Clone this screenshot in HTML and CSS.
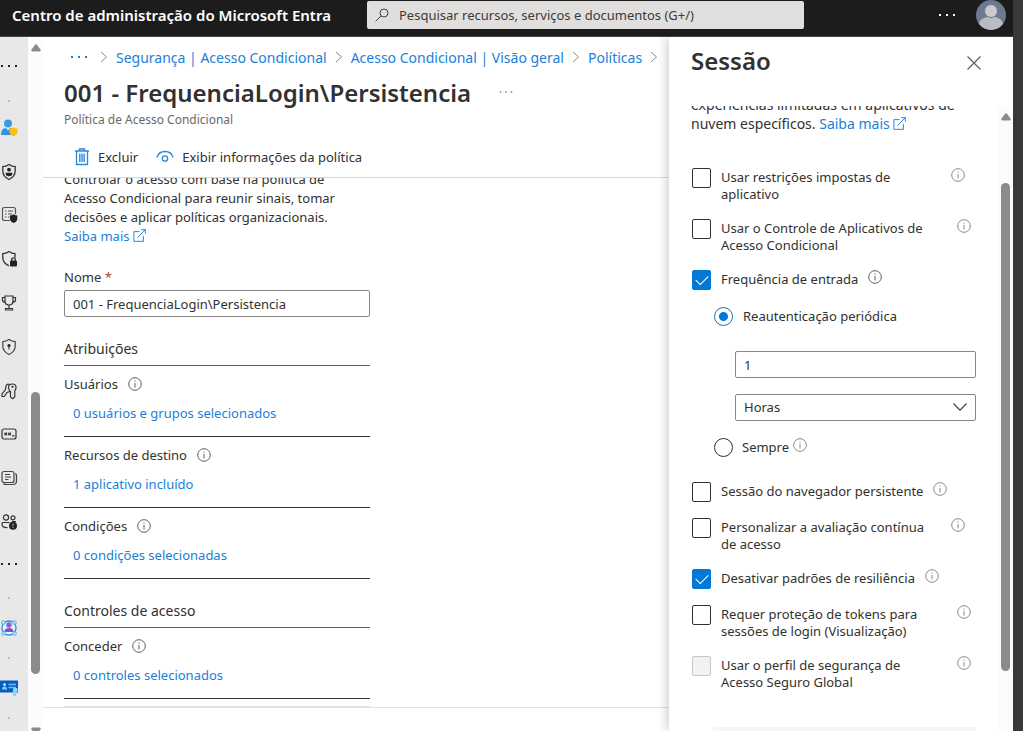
FILE: index.html
```html
<!DOCTYPE html>
<html lang="pt-BR">
<head>
    <meta charset="UTF-8">
    <title>Centro de administração do Microsoft Entra</title>
    <link rel="stylesheet" href="styles.css">
</head>
<body>
<!--shared icons-->
<svg class="icon-defs" aria-hidden="true">
    <symbol id="icon-info" viewBox="0 0 14 14">
        <circle cx="7" cy="7" r="6.3" fill="none" stroke="currentColor"/>
        <path d="M7 6v4.5M7 3.5v1.2" stroke="currentColor" fill="none"/>
    </symbol>
    <symbol id="icon-external" viewBox="0 0 14 14">
        <path d="M7 2.8H1v10.5h10.2V7.5M4.8 9.2l8.4-8.4M8.8.7h4.5v4.5" stroke="currentColor" fill="none"/>
    </symbol>
    <symbol id="icon-chevron" viewBox="0 0 8 12">
        <path d="M1 1l5.5 5L1 11" stroke="currentColor" fill="none"/>
    </symbol>
    <symbol id="icon-more" viewBox="0 0 18 4">
        <path d="M1 1h2v2H1zM8 1h2v2H8zM15 1h2v2h-2z" fill="currentColor"/>
    </symbol>
    <symbol id="icon-arrow" viewBox="0 0 10 8">
        <path d="M4 .8Q5-.4 6 .8l3.6 5Q10 7.5 8.500 7.500h-7Q0 7.500.4 5.800z" fill="currentColor"/>
    </symbol>
</svg>

<div class="screen">
    <div class="portal">
        <header class="topbar">
            <span class="brand">Centro de administração do Microsoft Entra</span>
            <label class="search">
                <svg class="search-icon" viewBox="0 0 14 14" aria-hidden="true">
                    <circle cx="9" cy="5" r="4" fill="none" stroke="#444"/>
                    <path d="M6 8L.6 13.400" stroke="#444"/>
                </svg>
                <input type="text" aria-label="Pesquisar" placeholder="Pesquisar recursos, serviços e documentos (G+/)">
            </label>
            <button class="topbar-more" aria-label="Mais">
                <svg width="18" height="4"><use href="#icon-more"/></svg>
            </button>
            <button class="avatar" aria-label="Conta">
                <svg width="30" height="30" viewBox="0 0 30 30">
                    <defs><clipPath id="avatar-clip"><circle cx="15" cy="15" r="15"/></clipPath></defs>
                    <g clip-path="url(#avatar-clip)">
                        <rect width="30" height="30" fill="#6b7a90"/>
                        <ellipse cx="15" cy="24" rx="12" ry="7.500" fill="#b9bdc2"/>
                        <circle cx="15" cy="11" r="6.500" fill="#c9cbce" stroke="#6b7a90"/>
                    </g>
                </svg>
            </button>
        </header>

        <div class="workspace">
            <nav class="rail" aria-label="Menu">
                <a href="#" class="rail-top" aria-label="Mais"><svg width="18" height="4"><use href="#icon-more"/></svg></a>
                <span class="rail-dot"></span>
                <div class="rail-list">
                    <a href="#" aria-label="Usuários">
                        <svg viewBox="0 0 18 18">
                            <circle cx="8" cy="4.500" r="4" fill="#3a9be0"/>
                            <path d="M1 16q0-7 5-7l2 2.500L10 9q5 0 5 7z" fill="#3193dd"/>
                            <path d="M9.500 9.500q2.500 0 4-1.200 1.500 1.200 4 1.200v3q0 3-4 5-4-2-4-5z" fill="#fdc010"/>
                        </svg>
                    </a>
                    <a href="#" aria-label="Proteção de identidade">
                        <svg viewBox="0 0 18 18" fill="none" stroke="#333" stroke-width="1.300">
                            <path d="M9 1.500q3 2 6.200 2.200V8q0 5.500-6.200 8.500Q2.800 13.500 2.800 8V3.700Q6 3.500 9 1.500z"/>
                            <circle cx="9" cy="6.700" r="1.900" fill="#222" stroke="none"/>
                            <path d="M5.500 9.800h7q0 3.500-3.500 3.500T5.500 9.800z" fill="#222" stroke="none"/>
                        </svg>
                    </a>
                    <a href="#" aria-label="Acesso condicional">
                        <svg viewBox="0 0 18 18" fill="none" stroke="#555" stroke-width="1.200">
                            <path d="M10 14.500H4.500q-2 0-2-2v-9q0-2 2-2h9q2 0 2 2V8M5 5h1.500M8 5h5M5 8h1.500M8 8h4M5 11h1.500M8 11h1.500"/>
                            <path d="M10 9.500q2 0 3.700-1.300Q15.500 9.500 17.300 9.500v3q0 3-3.600 4.500-3.700-1.500-3.700-4.500z" fill="#222" stroke="none"/>
                        </svg>
                    </a>
                    <a href="#" aria-label="Segurança">
                        <svg viewBox="0 0 18 18" fill="none" stroke="#333" stroke-width="1.300">
                            <path d="M9 15.800Q2.800 13 2.800 7.500V3.700Q6 3.500 9 1.500q3 2 6 2.200V7.500"/>
                            <rect x="10" y="10.500" width="7" height="6" rx="1" fill="#222" stroke="none"/>
                            <path d="M11.700 11V9.300q0-1.500 1.800-1.500t1.800 1.500V11"/>
                        </svg>
                    </a>
                    <a href="#" aria-label="Pontuação">
                        <svg viewBox="0 0 18 18" fill="none" stroke="#333" stroke-width="1.200">
                            <path d="M5 2h8v5q0 4-4 4T5 7zM5 3.500H2.500V6q0 2 2.800 2.500M13 3.500h2.500V6q0 2-2.800 2.500M9 11v3M5.500 16v-1.500h7V16z"/>
                        </svg>
                    </a>
                    <a href="#" aria-label="Autenticação">
                        <svg viewBox="0 0 18 18" fill="none" stroke="#444" stroke-width="1.200">
                            <path d="M9 1.500q3 2 6.200 2.200V8q0 5.500-6.200 8.500Q2.800 13.500 2.800 8V3.700Q6 3.500 9 1.500z"/>
                            <circle cx="9" cy="7.500" r="1.600" fill="#222" stroke="none"/>
                            <path d="M9 8v3.500"/>
                        </svg>
                    </a>
                    <a href="#" aria-label="Chaves">
                        <svg viewBox="0 0 18 18" fill="none" stroke="#333" stroke-width="1.200">
                            <path d="M10.500 9.500Q8.500 8 8.500 5.500 8.500 2 12.300 2t3.700 3.500q0 2-1.200 3.200v6l-2 2-2.300-1.700zM9.500 2.500Q7 1.500 6 4L5.500 7.500 2 12v2.500h2.200L7 10.500l3-1"/>
                            <circle cx="12.500" cy="4.800" r=".5" fill="#222"/>
                        </svg>
                    </a>
                    <a href="#" aria-label="Senhas">
                        <svg viewBox="0 0 18 18" fill="none" stroke="#333" stroke-width="1.200">
                            <rect x="2" y="4" width="14" height="10" rx="2"/>
                            <path d="M4.500 7.800l2.500 2.400M7 7.800l-2.500 2.400M8.300 7.800l2.500 2.400M10.800 7.800l-2.500 2.400M12 10.800h2.500"/>
                        </svg>
                    </a>
                    <a href="#" aria-label="Relatórios">
                        <svg viewBox="0 0 18 18" fill="none" stroke="#444" stroke-width="1.200">
                            <rect x="2" y="2.500" width="12" height="11" rx="2"/>
                            <path d="M5 5.500h5M5 8h6M5 10.500h3.500M15.500 4.500q1 1 1 2.500v5q0 3.500-3.500 3.500H6q-1.500 0-2.500-1"/>
                        </svg>
                    </a>
                    <a href="#" aria-label="Usuários suspeitos">
                        <svg viewBox="0 0 18 18" fill="none" stroke="#333" stroke-width="1.200">
                            <circle cx="6" cy="4.500" r="2.600"/>
                            <circle cx="13" cy="4.800" r="2"/>
                            <path d="M9.500 9.500H2.500Q2 9.500 2 11q0 4 5.500 3.500M12 8.500h4"/>
                            <circle cx="13" cy="12.800" r="4" fill="#222" stroke="none"/>
                            <path d="M13 10.500v2.800M13 14v1" stroke="#999"/>
                        </svg>
                    </a>
                </div>
                <a href="#" class="rail-more" aria-label="Mais"><svg width="18" height="4"><use href="#icon-more"/></svg></a>
                <span class="rail-item rail-dot"></span>
                <a href="#" class="rail-item" aria-label="Governança">
                    <svg viewBox="0 0 18 18">
                        <circle cx="9" cy="9" r="7" fill="#e6f3fc" stroke="#2f8fdd" stroke-width="1.400"/>
                        <circle cx="9" cy="6" r="2.700" fill="#8b5fcf"/>
                        <path d="M4.500 13q0-4 4.500-4t4.500 4z" fill="#8250c4"/>
                        <g fill="#bfe6fb" stroke="#45b5ee">
                            <circle cx="3.500" cy="3.500" r="1.800"/>
                            <circle cx="14.500" cy="3.500" r="1.800"/>
                            <circle cx="3.500" cy="14.500" r="1.800"/>
                            <circle cx="14.500" cy="14.500" r="1.800"/>
                        </g>
                    </svg>
                </a>
                <span class="rail-item rail-dot"></span>
                <a href="#" class="rail-item" aria-label="ID verificada">
                    <svg viewBox="0 0 18 18">
                        <rect x="0" y="1.500" width="18" height="12" fill="#0a5bc0"/>
                        <circle cx="4.500" cy="5.500" r="1.500" fill="#9fe0ff"/>
                        <path d="M2 10.500q0-3 2.500-3t2.500 3z" fill="#7bd0fa"/>
                        <path d="M8.500 5.500H16M8.500 8.500H16" stroke="#59c3f5" stroke-width="1.500"/>
                        <path d="M13 9.500q2.500-1.500 4.500 0v3l-1.500 1V17h-3v-3.500z" fill="#7fdcff"/>
                    </svg>
                </a>
                <span class="rail-item rail-dot"></span>
            </nav>

            <div class="scrollbar scrollbar-left" aria-hidden="true">
                <svg class="arrow" width="10" height="8"><use href="#icon-arrow"/></svg>
                <div class="thumb"></div>
                <svg class="arrow arrow-down" width="10" height="8"><use href="#icon-arrow"/></svg>
            </div>

            <main class="policy">
                <div class="policy-head">
                    <nav class="breadcrumb" aria-label="Trilha">
                        <a href="#" class="breadcrumb-more" aria-label="Mais"><svg width="18" height="4"><use href="#icon-more"/></svg></a>
                        <svg class="chevron"><use href="#icon-chevron"/></svg>
                        <a href="#">Segurança | Acesso Condicional</a>
                        <svg class="chevron"><use href="#icon-chevron"/></svg>
                        <a href="#">Acesso Condicional | Visão geral</a>
                        <svg class="chevron"><use href="#icon-chevron"/></svg>
                        <a href="#">Políticas</a>
                        <svg class="chevron"><use href="#icon-chevron"/></svg>
                    </nav>
                    <div class="title-row">
                        <h1>001 - FrequenciaLogin\Persistencia</h1>
                        <button class="title-more" aria-label="Mais opções"><svg width="14" height="4"><use href="#icon-more"/></svg></button>
                    </div>
                    <p class="subtitle">Política de Acesso Condicional</p>
                    <div class="commands">
                        <button>
                            <svg width="16" height="18" viewBox="0 0 16 18" fill="none" stroke="#2b88d8" stroke-width="1.300">
                                <path d="M5.500 2.500V1h5v1.500M1 3h14M2.500 3v13.500h11V3"/>
                                <path d="M5 6h6v8H5z" fill="#a9cff0" stroke="none"/>
                                <path d="M5.700 5.500v8.500M8 5.500v8.500M10.300 5.500v8.500" stroke-width="1"/>
                            </svg>
                            Excluir
                        </button>
                        <button>
                            <svg width="18" height="18" viewBox="0 0 18 18" fill="none" stroke="#2b88d8" stroke-width="1.300">
                                <path d="M1 9.500Q2.500 3.500 9 3.500t8 6"/>
                                <circle cx="9" cy="10.500" r="2.700"/>
                            </svg>
                            Exibir informações da política
                        </button>
                    </div>
                </div>

                <div class="policy-body">
                    <div class="form">
                        <p class="intro">Controlar o acesso com base na política de Acesso Condicional para reunir sinais, tomar decisões e aplicar políticas organizacionais. <a href="#" class="learn">Saiba mais <svg class="external"><use href="#icon-external"/></svg></a></p>

                        <label class="name-label" for="policy-name">Nome <span class="required">*</span></label>
                        <input class="text-input" id="policy-name" type="text" value="001 - FrequenciaLogin\Persistencia">

                        <h2>Atribuições</h2>
                        <section class="group">
                            <div class="group-label">Usuários <svg class="info"><use href="#icon-info"/></svg></div>
                            <a href="#">0 usuários e grupos selecionados</a>
                        </section>
                        <section class="group">
                            <div class="group-label">Recursos de destino <svg class="info"><use href="#icon-info"/></svg></div>
                            <a href="#">1 aplicativo incluído</a>
                        </section>
                        <section class="group">
                            <div class="group-label">Condições <svg class="info"><use href="#icon-info"/></svg></div>
                            <a href="#">0 condições selecionadas</a>
                        </section>

                        <h2>Controles de acesso</h2>
                        <section class="group">
                            <div class="group-label">Conceder <svg class="info"><use href="#icon-info"/></svg></div>
                            <a href="#">0 controles selecionados</a>
                        </section>
                        <div class="next-item"></div>
                    </div>
                </div>
                <footer class="policy-foot"></footer>
            </main>

            <aside class="panel">
                <div class="panel-head">
                    <h2>Sessão</h2>
                    <button aria-label="Fechar">
                        <svg width="14" height="14" viewBox="0 0 14 14"><path d="M.5.5l13 13M13.500.5l-13 13" stroke="#605e5c" stroke-width="1.200"/></svg>
                    </button>
                </div>
                <div class="panel-body">
                    <div class="panel-content">
                        <p class="panel-intro">experiências limitadas em aplicativos de<br>nuvem específicos. <a href="#" class="learn">Saiba mais <svg class="external"><use href="#icon-external"/></svg></a></p>
                        <div class="options">
                            <div class="option">
                                <input type="checkbox" id="opt-restrictions">
                                <label class="wrap-narrow" for="opt-restrictions">Usar restrições impostas de<br>aplicativo</label>
                                <svg class="info info-light"><use href="#icon-info"/></svg>
                            </div>
                            <div class="option">
                                <input type="checkbox" id="opt-app-control">
                                <label class="wrap" for="opt-app-control">Usar o Controle de Aplicativos de<br>Acesso Condicional</label>
                                <svg class="info info-light"><use href="#icon-info"/></svg>
                            </div>
                            <div class="option">
                                <input type="checkbox" id="opt-frequency" checked>
                                <label for="opt-frequency">Frequência de entrada</label>
                                <svg class="info"><use href="#icon-info"/></svg>
                            </div>
                            <div class="frequency">
                                <div class="option">
                                    <input type="radio" name="frequency" id="freq-periodic" checked>
                                    <label for="freq-periodic">Reautenticação periódica</label>
                                </div>
                                <div class="frequency-fields">
                                    <input class="text-input" type="text" aria-label="Valor" value="1">
                                    <div class="select">
                                        <select aria-label="Unidade">
                                            <option>Horas</option>
                                            <option>Dias</option>
                                        </select>
                                        <svg class="select-arrow" viewBox="0 0 14 8"><path d="M.5.5L7 7.200 13.500.5" fill="none" stroke="#444" stroke-width="1.200"/></svg>
                                    </div>
                                </div>
                                <div class="option option-tight">
                                    <input type="radio" name="frequency" id="freq-always">
                                    <label for="freq-always">Sempre</label>
                                    <svg class="info info-light"><use href="#icon-info"/></svg>
                                </div>
                            </div>
                            <div class="option">
                                <input type="checkbox" id="opt-persistent">
                                <label for="opt-persistent">Sessão do navegador persistente</label>
                                <svg class="info info-light"><use href="#icon-info"/></svg>
                            </div>
                            <div class="option">
                                <input type="checkbox" id="opt-cae">
                                <label class="wrap-narrow" for="opt-cae">Personalizar a avaliação contínua<br>de acesso</label>
                                <svg class="info info-light"><use href="#icon-info"/></svg>
                            </div>
                            <div class="option">
                                <input type="checkbox" id="opt-resilience" checked>
                                <label for="opt-resilience">Desativar padrões de resiliência</label>
                                <svg class="info info-light"><use href="#icon-info"/></svg>
                            </div>
                            <div class="option">
                                <input type="checkbox" id="opt-token">
                                <label class="wrap" for="opt-token">Requer proteção de tokens para<br>sessões de login (Visualização)</label>
                                <svg class="info info-light"><use href="#icon-info"/></svg>
                            </div>
                            <div class="option">
                                <input type="checkbox" id="opt-gsa" disabled>
                                <label class="wrap" for="opt-gsa">Usar o perfil de segurança de<br>Acesso Seguro Global</label>
                                <svg class="info info-light"><use href="#icon-info"/></svg>
                            </div>
                        </div>
                        <div class="notice"></div>
                    </div>
                    <div class="scrollbar scrollbar-right" aria-hidden="true">
                        <svg class="arrow" width="10" height="8"><use href="#icon-arrow"/></svg>
                        <div class="thumb"></div>
                    </div>
                </div>
            </aside>
        </div>
    </div>
    <div class="edge"></div>
</div>
</body>
</html>
```

FILE: styles.css
```css
/*reset*/
* {
    box-sizing: border-box;
    padding: 0;
    margin: 0;
}

body {
    font-family: "Noto Sans", "Open Sans", sans-serif;
    font-size: 13px;
    line-height: 19px;
    color: #323130;
    background-color: #fff;
}

button {
    border: none;
    background: none;
    font: inherit;
    color: inherit;
    cursor: pointer;
}

input, select {
    font: inherit;
    color: inherit;
}

a {
    color: #1a80d9;
    text-decoration: none;
}

svg {
    display: block;
    flex: none;
}

.icon-defs {
    position: absolute;
    width: 0;
    height: 0;
}

.screen {
    display: grid;
    grid-template-columns: minmax(0, 1fr) 10px;
    height: 100vh;
    overflow: hidden;
}

.edge {
    background-color: #393939;
}

.portal {
    display: flex;
    flex-direction: column;
    min-height: 0;
}

/*top bar*/
.topbar {
    display: flex;
    align-items: center;
    height: 37px;
    padding: 0 7px 6px 12px;
    background-color: #1c1c1c;
    border-bottom: 1px solid #444;
    color: #fff;
}

.brand {
    flex: none;
    width: 355px;
    font-size: 15px;
    font-weight: 600;
    white-space: nowrap;
}

.search {
    display: flex;
    align-items: center;
    gap: 10px;
    flex: 0 1 437px;
    height: 28px;
    padding: 0 8px;
    border-radius: 2px;
    background-color: #e1dfdd;
}

.search-icon {
    width: 14px;
    height: 14px;
}

.search input {
    flex: 1;
    min-width: 0;
    border: none;
    outline: none;
    background: none;
}

.search input::placeholder {
    color: #3b3a39;
    opacity: 1;
}

.topbar-more {
    margin-left: auto;
    margin-right: 20px;
}

/*workspace*/
.workspace {
    display: flex;
    flex: 1;
    min-height: 0;
}

.rail {
    flex: none;
    width: 28px;
    padding-right: 10px;
    overflow: hidden;
    background-color: #e8e8e8;
}

.rail a {
    display: flex;
    align-items: center;
    color: #222;
}

.rail svg:not([width]) {
    width: 18px;
    height: 18px;
}

.rail-top {
    height: 58px;
}

.rail-dot {
    display: flex;
    align-items: center;
    justify-content: center;
    height: 11px;
}

.rail-dot::before {
    content: "";
    width: 2px;
    height: 2px;
    background-color: #bbb;
}

.rail-list {
    display: flex;
    flex-direction: column;
    height: 438px;
}

.rail-list a {
    flex: 1;
}

.rail-more {
    height: 39px;
}

.rail-item {
    height: 30px;
}

/*scrollbars*/
.scrollbar {
    display: flex;
    flex-direction: column;
    align-items: center;
    flex: none;
    width: 15px;
    padding-top: 7px;
    background-color: #fcfcfc;
    color: #8a8a8a;
}

.thumb {
    width: 9px;
    border-radius: 5px;
    background-color: #8b8b8b;
}

.scrollbar-left .thumb {
    height: 41%;
    margin-top: 340px;
}

.scrollbar-right .thumb {
    height: 79%;
    margin-top: 62px;
}

.arrow-down {
    margin-top: auto;
    margin-bottom: -4px;
    transform: rotate(180deg);
}

/*policy page*/
.policy {
    display: flex;
    flex-direction: column;
    flex: 1;
    min-width: 0;
}

.policy-head {
    height: 141px;
    padding: 10px 0 0 21px;
    border-bottom: 1px solid #d8d8d8;
}

.breadcrumb {
    display: flex;
    align-items: center;
    gap: 8px;
    height: 20px;
    padding-left: 6px;
    overflow: hidden;
    font-size: 14px;
    white-space: nowrap;
}

.breadcrumb-more {
    margin-right: 4px;
}

.chevron {
    width: 8px;
    height: 12px;
    color: #8a8886;
}

.title-row {
    display: flex;
    align-items: center;
    gap: 28px;
    height: 45px;
    padding-top: 5px;
}

h1 {
    font-size: 24px;
    font-weight: 600;
    white-space: nowrap;
}

.title-more {
    color: #8a8886;
}

.subtitle {
    font-size: 12px;
    line-height: 16px;
    padding-bottom: 18px;
    color: #6b6967;
}

.commands {
    display: flex;
    gap: 18px;
    padding-left: 10px;
}

.commands button {
    display: flex;
    align-items: center;
    gap: 8px;
    height: 22px;
}

.policy-body {
    flex: 1;
    min-height: 0;
    padding-left: 21px;
    overflow: hidden;
}

.form {
    width: 306px;
    margin-top: -8px;
}

.intro {
    width: 290px;
}

.learn {
    white-space: nowrap;
}

.external {
    display: inline-block;
    width: 13px;
    height: 13px;
    vertical-align: -1px;
}

.name-label {
    display: block;
    padding: 22px 0 3px;
}

.required {
    color: #a4462c;
}

.text-input {
    display: block;
    width: 100%;
    height: 27px;
    padding: 0 8px;
    border: 1px solid #8a8886;
    border-radius: 2px;
    background-color: #fff;
}

.form h2 {
    height: 49px;
    padding-top: 22px;
    border-bottom: 1px solid #605e5c;
    font-size: 14px;
    font-weight: 400;
    line-height: 20px;
}

.group {
    padding: 8px 0 13px;
    border-bottom: 1px solid #323130;
    line-height: 20px;
}

.group-label {
    display: flex;
    align-items: center;
    gap: 10px;
    margin-bottom: 9px;
}

.group a {
    display: block;
    padding-left: 9px;
}

.info {
    width: 14px;
    height: 14px;
    color: #605e5c;
}

.info-light {
    color: #8a8886;
}

.next-item {
    height: 20px;
    margin-top: 7px;
    background-color: #e1e1e1;
}

.policy-foot {
    height: 24px;
    border-top: 1px solid #e1e1e1;
}

/*session panel*/
.panel {
    display: flex;
    flex-direction: column;
    flex: none;
    width: 344px;
    background-color: #fff;
    box-shadow: -2px 0 10px rgba(0, 0, 0, .2);
    clip-path: inset(0 0 0 -16px);
}

.panel-head {
    display: flex;
    align-items: center;
    justify-content: space-between;
    height: 69px;
    padding: 0 32px 18px 22px;
}

.panel-head h2 {
    padding-bottom: 4px;
    font-size: 24px;
    font-weight: 600;
}

.panel-body {
    display: flex;
    flex: 1;
    min-height: 0;
    overflow: hidden;
}

.panel-content {
    flex: 1;
    padding: 0 22px;
}

.panel-intro {
    margin-top: -11px;
    font-size: 14px;
    white-space: nowrap;
}

.options {
    display: flex;
    flex-direction: column;
    gap: 16px;
    padding: 35px 0 36px 1px;
}

.option {
    display: flex;
    align-items: flex-start;
    gap: 10px;
    line-height: 17px;
}

.option label {
    padding-top: 1px;
    white-space: nowrap;
}

.option .wrap {
    width: 226px;
}

.option .wrap-narrow {
    width: 220px;
}

.option input {
    flex: none;
    width: 19px;
    height: 20px;
    appearance: none;
    border: 1px solid #323130;
    border-radius: 2px;
    background-color: #fff;
}

.option input:disabled {
    border-color: #c8c6c4;
    background-color: #f3f2f1;
}

.option input[type="checkbox"]:checked {
    display: grid;
    place-items: center;
    border-color: #0078d4;
    background-color: #0078d4;
}

.option input[type="checkbox"]:checked::before {
    content: "";
    width: 11px;
    height: 6px;
    margin-bottom: 4px;
    border: solid #fff;
    border-width: 0 0 1px 1px;
    transform: rotate(-45deg);
}

.option input[type="radio"] {
    height: 19px;
    border-radius: 50%;
}

.option input[type="radio"]:checked {
    border-color: #0078d4;
    background: radial-gradient(circle, #0078d4 4px, #fff 5px);
}

.frequency {
    padding: 1px 0 9px 22px;
}

.frequency-fields {
    display: grid;
    gap: 16px;
    padding: 25px 0 17px 21px;
}

.option-tight {
    gap: 9px;
}

.option-tight .info {
    margin-left: -5px;
}

.select {
    position: relative;
}

.select select {
    display: block;
    width: 100%;
    height: 27px;
    padding: 0 8px;
    appearance: none;
    border: 1px solid #8a8886;
    border-radius: 2px;
    background-color: #fff;
}

.select-arrow {
    position: absolute;
    top: 9px;
    right: 9px;
    width: 14px;
    height: 8px;
    pointer-events: none;
}

.notice {
    height: 40px;
    margin-left: 22px;
    background-color: #eff6fc;
}
```
